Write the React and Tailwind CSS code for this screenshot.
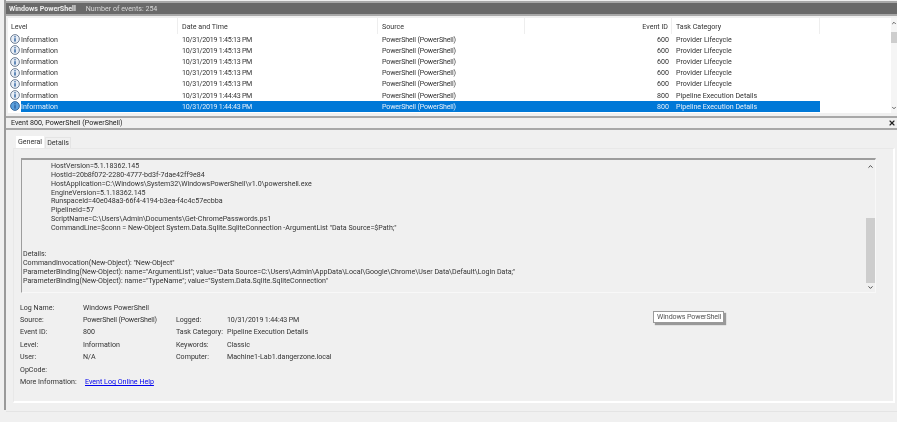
import { ChevronUp, ChevronDown, X } from 'lucide-react'

const rows = [
  { time: '10/31/2019 1:45:13 PM', id: 600, task: 'Provider Lifecycle' },
  { time: '10/31/2019 1:45:13 PM', id: 600, task: 'Provider Lifecycle' },
  { time: '10/31/2019 1:45:13 PM', id: 600, task: 'Provider Lifecycle' },
  { time: '10/31/2019 1:45:13 PM', id: 600, task: 'Provider Lifecycle' },
  { time: '10/31/2019 1:45:13 PM', id: 600, task: 'Provider Lifecycle' },
  { time: '10/31/2019 1:44:43 PM', id: 800, task: 'Pipeline Execution Details' },
  { time: '10/31/2019 1:44:43 PM', id: 800, task: 'Pipeline Execution Details', selected: true },
]

const indented = [
  'HostVersion=5.1.18362.145',
  'HostId=20b8f072-2280-4777-bd3f-7dae42ff9e84',
  'HostApplication=C:\\Windows\\System32\\WindowsPowerShell\\v1.0\\powershell.exe',
  'EngineVersion=5.1.18362.145',
  'RunspaceId=40e048a3-66f4-4194-b3ea-f4c4c57ecbba',
  'PipelineId=57',
  'ScriptName=C:\\Users\\Admin\\Documents\\Get-ChromePasswords.ps1',
  'CommandLine=$conn = New-Object System.Data.Sqlite.SqliteConnection -ArgumentList "Data Source=$Path;"',
]

const details = [
  'Details:',
  'CommandInvocation(New-Object): "New-Object"',
  'ParameterBinding(New-Object): name="ArgumentList"; value="Data Source=C:\\Users\\Admin\\AppData\\Local\\Google\\Chrome\\User Data\\Default\\Login Data;"',
  'ParameterBinding(New-Object): name="TypeName"; value="System.Data.Sqlite.SqliteConnection"',
]

const InfoIcon = ({ selected }) => (
  <svg width="10" height="10" viewBox="0 0 10 10" className="shrink-0">
    <circle cx="5" cy="5" r="4.4" fill={selected ? '#5a9fdc' : '#e8eef6'} stroke={selected ? '#1d4f86' : '#51657e'} strokeWidth="0.8" />
    <rect x="4.3" y="4.2" width="1.4" height="3.4" fill="#2a5f9e" />
    <rect x="4.3" y="2.2" width="1.4" height="1.2" fill="#2a5f9e" />
  </svg>
)

const Field = ({ label, value, tight }) => (
  <>
    <span>{label}</span>
    <span className={tight ? 'tracking-[-0.15px]' : ''}>{value}</span>
  </>
)

export default function App() {
  return (
    <div className="relative flex h-[422px] w-[897px] overflow-hidden bg-[#f0f0f0] font-['Roboto',sans-serif] text-[7.1px] leading-none text-[#333] blur-[0.35px]">
      {/* left frame */}
      <div className="h-[410px] w-[6px] shrink-0 border-r-2 border-[#9a9a9a]" />

      <div className="flex min-w-0 flex-1 flex-col pt-[1px]">
        {/* title bar */}
        <div className="flex h-[15px] items-center gap-[10px] border-y-2 border-[#a8a8a8] bg-[#696969] pl-[3px] text-[#d8d8d8]">
          <span className="font-bold text-[#eee]">Windows PowerShell</span>
          <span>Number of events: 254</span>
        </div>

        {/* event list */}
        <div className="mt-[2px] ml-[2px] flex h-[95px] bg-white">
          <div className="flex-1">
            <div className="flex h-[15.7px] items-center">
              <div className="h-full w-[170px] border-r border-[#eee] pt-[5px] pl-[3px]">Level</div>
              <div className="h-full w-[200px] border-r border-[#eee] pt-[5px] pl-[4px]">Date and Time</div>
              <div className="h-full w-[147px] border-r border-[#eee] pt-[5px] pl-[4px]">Source</div>
              <div className="h-full w-[147px] border-r border-[#eee] pt-[5px] pr-[3px] text-right">Event ID</div>
              <div className="h-full w-[148px] border-r border-[#eee] pt-[5px] pl-[4px]">Task Category</div>
            </div>
            {rows.map((row, i) => (
              <div key={i} className="flex h-[11.2px] w-[812px] items-center">
                <div className="flex w-[170px] items-center gap-[1px] pl-[2px]">
                  <InfoIcon selected={row.selected} />
                  <span className={row.selected ? 'flex h-[11.2px] flex-1 items-center bg-[#0078d7] text-[#e6f0fa]' : ''}>Information</span>
                </div>
                <div className={`flex h-full flex-1 items-center ${row.selected ? 'bg-[#0078d7] text-[#e6f0fa]' : ''}`}>
                  <span className="w-[200px] pl-[4px] tracking-[-0.25px]">{row.time}</span>
                  <span className="w-[143px] pl-[4px] tracking-[-0.15px]">PowerShell (PowerShell)</span>
                  <span className="w-[151px] pr-[3px] text-right">{row.id}</span>
                  <span className="pl-[4px]">{row.task}</span>
                </div>
              </div>
            ))}
          </div>
          {/* list scrollbar */}
          <div className="flex w-[6px] flex-col items-center justify-between bg-[#f5f5f5] pt-[2px] pb-[2px]">
            <ChevronUp size={6} strokeWidth={3} />
            <div className="absolute top-[32px] h-[11px] w-[6px] bg-[#cdcdcd]" />
            <ChevronDown size={6} strokeWidth={3} />
          </div>
        </div>

        {/* preview pane */}
        <div className="mt-[3px] flex h-[14px] items-center justify-between border-y-2 border-[#a8a8a8] pr-[1px] pl-[5px] text-[#222]">
          <span>Event 800, PowerShell (PowerShell)</span>
          <X size={8} strokeWidth={3.5} className="text-[#222]" />
        </div>

        {/* tabs */}
        <div className="mt-[6px] ml-[10px] flex h-[12px] items-end gap-[1px]">
          <div className="flex h-[12px] w-[28px] items-center justify-center bg-white">General</div>
          <div className="flex h-[11px] w-[26px] items-center justify-center border border-b-0 border-[#e4e4e4] bg-[#f0f0f0]">Details</div>
        </div>

        <div className="ml-[7px] mr-[2px] h-[255px] border border-r-2 border-b-2 border-[#e8e8e8] border-r-white border-b-white pt-[9px] pr-[17px] pl-[6px]">
          {/* description box */}
          <div className="ml-[1px] flex h-[135px] border-t-2 border-l border-r border-b border-[#9d9d9d] border-r-[#f8f8f8] border-b-[#f8f8f8]">
            <div className="min-w-0 flex-1 overflow-hidden pl-[1px]">
              <div className="pt-[1px] pl-[28px]">
                {indented.map((line) => (
                  <div key={line} className="flex h-[8.9px] items-center whitespace-nowrap">{line}</div>
                ))}
              </div>
              <div className="mt-[17px]">
                {details.map((line) => (
                  <div key={line} className="flex h-[8.9px] items-center whitespace-nowrap">{line}</div>
                ))}
              </div>
            </div>
            <div className="flex w-[10px] flex-col items-center justify-between pt-[3px]">
              <ChevronUp size={7} strokeWidth={3} />
              <div className="mt-auto h-[65px] w-[9px] bg-[#cdcdcd]" />
              <ChevronDown size={7} strokeWidth={3} className="my-[1px]" />
            </div>
          </div>

          {/* event fields */}
          <div className="mt-[8px] grid auto-rows-[12.4px] grid-cols-[63px_93px_51px_1fr] items-center">
            <Field label="Log Name:" value="Windows PowerShell" />
            <span /><span />
            <Field label="Source:" value="PowerShell (PowerShell)" tight />
            <Field label="Logged:" value="10/31/2019 1:44:43 PM" tight />
            <Field label="Event ID:" value="800" />
            <Field label="Task Category:" value="Pipeline Execution Details" />
            <Field label="Level:" value="Information" />
            <Field label="Keywords:" value="Classic" />
            <Field label="User:" value="N/A" />
            <Field label="Computer:" value="Machine1-Lab1.dangerzone.local" />
            <span className="col-span-4">OpCode:</span>
            <span>More Information:</span>
            <a className="col-span-3 pl-[2px] text-[#0000ee] underline">Event Log Online Help</a>
          </div>
        </div>

        <div className="mt-[8px] h-[1px] bg-[#e4e4e4]" />
      </div>

      {/* tooltip */}
      <div className="absolute top-[311px] left-[653px] flex h-[12px] w-[71px] items-center border border-[#9a9a9a] bg-white pl-[3px] tracking-[-0.1px] whitespace-nowrap text-[#555] shadow-[2px_2px_1px_#999]">
        Windows PowerShell
      </div>
    </div>
  )
}
